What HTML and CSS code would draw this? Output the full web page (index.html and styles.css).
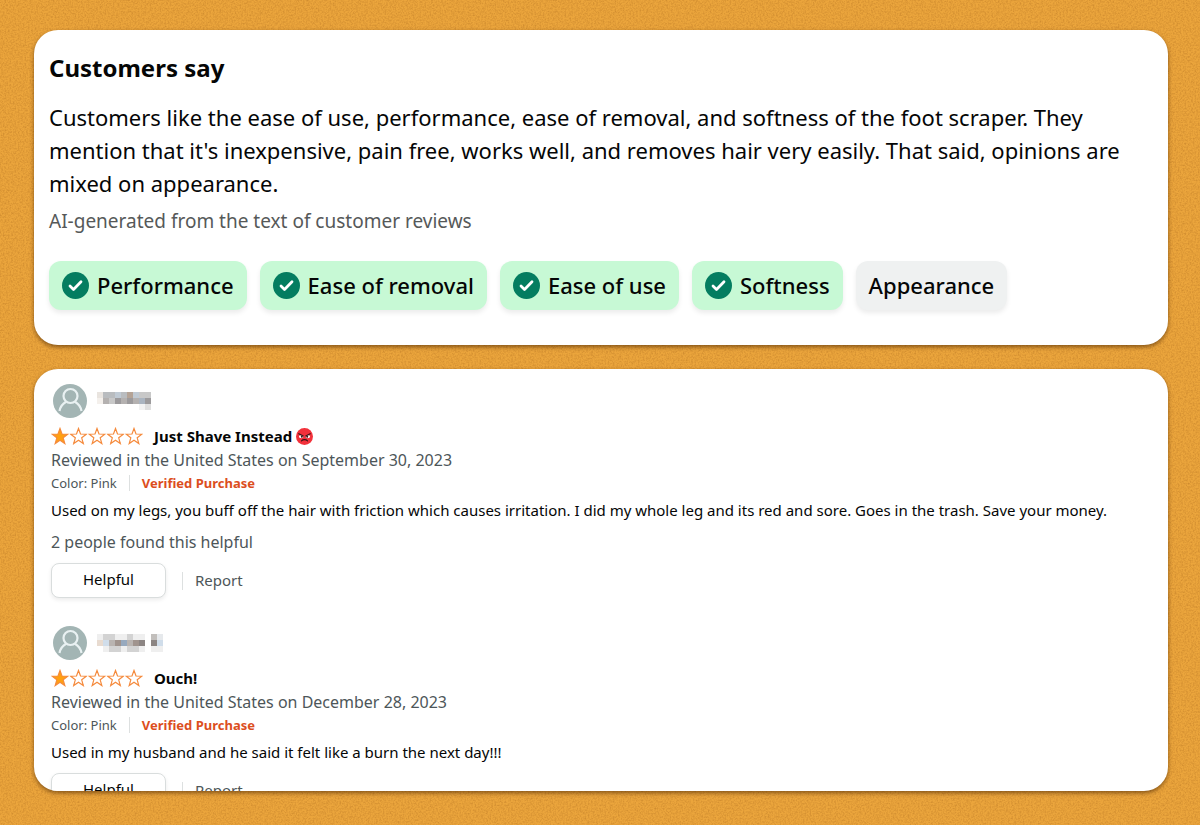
FILE: index.html
```html
<!DOCTYPE html>
<html lang="en">

<head>
  <meta charset="UTF-8">
  <meta name="viewport" content="width=device-width, initial-scale=1.0">
  <title>Customer reviews</title>
  <link rel="stylesheet" href="styles.css">
</head>

<body>
  <!-- shared icons -->
  <svg class="sprite" aria-hidden="true">
    <filter id="noise" x="0" y="0" width="100%" height="100%" color-interpolation-filters="sRGB">
      <feTurbulence type="fractalNoise" baseFrequency="0.6" numOctaves="3" seed="4" />
      <feColorMatrix values="0 0 0 0 0.6  0 0 0 0 0.35  0 0 0 0 0.08  0.6 0 0 0 -0.22" />
    </filter>
    <symbol id="check" viewBox="0 0 27 27">
      <circle cx="13.5" cy="13.5" r="13.5" fill="#047d60" />
      <path d="M8 14l3.500 3.500L19 9.800" fill="none" stroke="#fff" stroke-width="2.800" stroke-linecap="round" stroke-linejoin="round" />
    </symbol>
    <symbol id="avatar" viewBox="0 0 34 34">
      <circle cx="17" cy="17" r="17" fill="#a3b5b4" />
      <circle cx="17.5" cy="12" r="7" fill="none" stroke="#e9f1f2" stroke-width="2.200" />
      <path d="M6.500 27c.8-4.500 3.300-7.500 7-9.500M28.500 27c-.8-4.500-3.300-7.500-7-9.500" fill="none" stroke="#e9f1f2" stroke-width="2.200" />
    </symbol>
    <symbol id="star" viewBox="0 0 18 18">
      <path d="M9 1.500l2 5.500 5.800.2-4.600 3.600 1.600 5.700L9 13.200l-4.800 3.300 1.600-5.700L1.200 7.200 7 7z" stroke="#f58a3c" stroke-width="1.200" />
    </symbol>
    <symbol id="one-star" viewBox="0 0 92 18">
      <use href="#star" width="18" height="18" fill="#ffa011" />
      <g fill="#fff">
        <use href="#star" x="18.5" width="18" height="18" />
        <use href="#star" x="37" width="18" height="18" />
        <use href="#star" x="55.5" width="18" height="18" />
        <use href="#star" x="74" width="18" height="18" />
      </g>
    </symbol>
  </svg>
  <svg class="grain" aria-hidden="true">
    <rect width="100%" height="100%" filter="url(#noise)" />
  </svg>

  <section class="card summary">
    <h1>Customers say</h1>
    <p class="summary-text">Customers like the ease of use, performance, ease of removal, and softness of the foot scraper. They mention that it's inexpensive, pain free, works well, and removes hair very easily. That said, opinions are mixed on appearance.</p>
    <p class="summary-note">AI-generated from the text of customer reviews</p>
    <div class="tags">
      <button class="tag positive"><svg><use href="#check" /></svg>Performance</button>
      <button class="tag positive"><svg><use href="#check" /></svg>Ease of removal</button>
      <button class="tag positive"><svg><use href="#check" /></svg>Ease of use</button>
      <button class="tag positive"><svg><use href="#check" /></svg>Softness</button>
      <button class="tag">Appearance</button>
    </div>
  </section>

  <main class="card reviews">
    <article class="review">
      <div class="profile">
        <svg class="avatar"><use href="#avatar" /></svg>
        <svg class="hidden-name" viewBox="0 0 11 3" shape-rendering="crispEdges" role="img" aria-label="Name hidden">
          <path d="M0 0h1v1H0z" fill="#e9e4df" />
          <path d="M0 1h1v1H0z" fill="#f4f0ec" />
          <path d="M1 0h2v1H1zM4 0h1v1H4z" fill="#b9bcbf" />
          <path d="M3 0h1v1H3zM6 0h1v1H6z" fill="#c0cad4" />
          <path d="M5 0h1v1H5z" fill="#b4a396" />
          <path d="M7 0h2v1H7zM2 1h1v1H2z" fill="#c8c8c8" />
          <path d="M1 1h1v1H1zM4 1h1v1H4zM6 1h1v1H6z" fill="#b4b1b0" />
          <path d="M3 1h1v1H3zM5 1h1v1H5zM8 1h1v1H8z" fill="#9c9a9c" />
          <path d="M7 1h1v1H7z" fill="#aab4c0" />
          <path d="M7 2h1v1H7z" fill="#f2f2f2" />
          <path d="M8 2h1v1H8z" fill="#dfdfdf" />
        </svg>
      </div>
      <div class="rating">
        <svg class="stars" role="img" aria-label="1 out of 5 stars"><use href="#one-star" /></svg>
        <h2>Just Shave Instead</h2>
        <svg class="angry" viewBox="0 0 17 17" role="img" aria-label="Angry face">
          <circle cx="8.5" cy="8.5" r="8.5" fill="#f2313b" />
          <ellipse cx="5.2" cy="8.600" rx="2.300" ry="1.700" fill="#fff" />
          <ellipse cx="11.800" cy="8.600" rx="2.300" ry="1.700" fill="#fff" />
          <path d="M2.800 5.700l4.400 2.300M14.200 5.700L9.800 8M5.500 12.800c1.600-1.700 4.400-1.700 6 0" fill="none" stroke="#3a1518" stroke-width="1.200" stroke-linecap="round" />
          <circle cx="5.800" cy="8.800" r="1" fill="#3a1518" />
          <circle cx="11.200" cy="8.800" r="1" fill="#3a1518" />
        </svg>
      </div>
      <p class="date">Reviewed in the United States on September 30, 2023</p>
      <div class="details">
        <span class="color">Color: Pink</span>
        <a href="#" class="verified">Verified Purchase</a>
      </div>
      <p class="review-text">Used on my legs, you buff off the hair with friction which causes irritation. I did my whole leg and its red and sore. Goes in the trash. Save your money.</p>
      <p class="votes">2 people found this helpful</p>
      <div class="actions">
        <button class="helpful">Helpful</button>
        <a href="#" class="report">Report</a>
      </div>
    </article>

    <article class="review">
      <div class="profile">
        <svg class="avatar"><use href="#avatar" /></svg>
        <svg class="hidden-name" viewBox="0 0 11 3" shape-rendering="crispEdges" role="img" aria-label="Name hidden">
          <path d="M0 0h1v1H0zM3 0h2v1H3zM6 0h2v1H6zM1 2h1v1H1zM4 2h1v1H4zM7 2h1v1H7zM9 2h2v1H9z" fill="#efefef" />
          <path d="M1 0h2v1H1zM5 0h1v1H5zM2 2h2v1H2zM5 2h2v1H5z" fill="#d3d3d3" />
          <path d="M0 1h1v1H0z" fill="#e8dbd0" />
          <path d="M1 1h1v1H1zM10 1h1v1h-1z" fill="#d0ddea" />
          <path d="M2 1h1v1H2zM5 1h1v1H5z" fill="#b9b4b1" />
          <path d="M3 1h1v1H3zM6 1h1v1H6z" fill="#a0948e" />
          <path d="M4 1h1v1H4z" fill="#97a9be" />
          <path d="M7 1h1v1H7zM9 1h1v1H9z" fill="#8c8583" />
          <path d="M9 0h1v1H9z" fill="#c2bfbc" />
          <path d="M10 0h1v1h-1z" fill="#e6e9ec" />
        </svg>
      </div>
      <div class="rating">
        <svg class="stars" role="img" aria-label="1 out of 5 stars"><use href="#one-star" /></svg>
        <h2>Ouch!</h2>
      </div>
      <p class="date">Reviewed in the United States on December 28, 2023</p>
      <div class="details">
        <span class="color">Color: Pink</span>
        <a href="#" class="verified">Verified Purchase</a>
      </div>
      <p class="review-text">Used in my husband and he said it felt like a burn the next day!!!</p>
      <div class="actions">
        <button class="helpful">Helpful</button>
        <a href="#" class="report">Report</a>
      </div>
    </article>
  </main>
</body>

</html>
```

FILE: styles.css
```css
* {
  box-sizing: border-box;
}

body {
  font-family: "Noto Sans", sans-serif;
  margin: 0;
  padding: 30px 32px 34px 34px;
  height: 100vh;
  display: flex;
  flex-direction: column;
  gap: 24px;
  color: #050606;
  background-color: #eba53c;
}

h1, h2, p {
  margin: 0;
}

a {
  text-decoration: none;
}

button {
  font-family: inherit;
  color: inherit;
  cursor: pointer;
}

svg {
  display: block;
  flex-shrink: 0;
}

.sprite {
  position: absolute;
  width: 0;
  height: 0;
}

.grain {
  position: absolute;
  top: 0;
  left: 0;
  width: 100%;
  height: 100%;
  z-index: -1;
}

.card {
  background: #fff;
  border-radius: 24px;
  box-shadow: 0 2px 4px rgba(70, 35, 0, 0.6);
}

/* summary */
.summary {
  padding: 20px 15px 35px;
}

.summary h1 {
  font-size: 24px;
  line-height: 36px;
}

.summary-text {
  margin-top: 15px;
  font-size: 22px;
  line-height: 33px;
}

.summary-note {
  margin-top: 8px;
  font-size: 19px;
  line-height: 26px;
  color: #565959;
}

.tags {
  display: flex;
  flex-wrap: wrap;
  gap: 13px;
  margin-top: 27px;
}

.tag {
  display: flex;
  align-items: center;
  gap: 8px;
  height: 49px;
  padding: 0 13px 1px;
  border: none;
  border-radius: 12px;
  background: #eff1f1;
  box-shadow: 0 3px 5px rgba(15, 17, 17, 0.08);
  font-size: 22px;
  font-weight: 500;
}

.tag.positive {
  background: #c7f9d5;
}

.tag svg {
  width: 27px;
  height: 27px;
}

/* reviews */
.reviews {
  flex: 1;
  min-height: 0;
  overflow: hidden;
  padding: 15px 17px;
}

.review {
  margin-bottom: 28px;
}

.profile {
  display: flex;
  align-items: center;
  gap: 10px;
  padding-left: 2px;
  margin-bottom: 6px;
}

.avatar {
  width: 34px;
  height: 34px;
}

.hidden-name {
  width: 66px;
  height: 18px;
}

.rating {
  display: flex;
  align-items: center;
  height: 24px;
}

.stars {
  width: 92px;
  height: 18px;
  margin-right: 11px;
}

.rating h2 {
  font-size: 15px;
  line-height: 24px;
}

.angry {
  width: 17px;
  height: 17px;
  margin-left: 4px;
}

.date,
.votes {
  font-size: 16px;
  line-height: 24px;
  color: #4d5659;
}

.details {
  display: flex;
  align-items: center;
  height: 22px;
  font-size: 13px;
  line-height: 16px;
}

.color {
  padding-right: 12px;
  margin-right: 12px;
  border-right: 1px solid #dde0e0;
  color: #4d5659;
}

.verified {
  font-weight: bold;
  color: #dc4e1e;
}

.review-text {
  margin-top: 4px;
  font-size: 15px;
  line-height: 24px;
}

.votes {
  margin-top: 8px;
}

.actions {
  display: flex;
  align-items: center;
  margin-top: 9px;
}

.helpful {
  width: 115px;
  height: 35px;
  padding-bottom: 4px;
  border: 1px solid #d9dddd;
  border-radius: 8px;
  background: #fff;
  box-shadow: 0 2px 4px rgba(15, 17, 17, 0.08);
  font-size: 15px;
}

.report {
  margin-left: 16px;
  padding: 0 0 2px 12px;
  border-left: 1px solid #dde0e0;
  font-size: 15px;
  line-height: 16px;
  color: #4d5659;
}
```
